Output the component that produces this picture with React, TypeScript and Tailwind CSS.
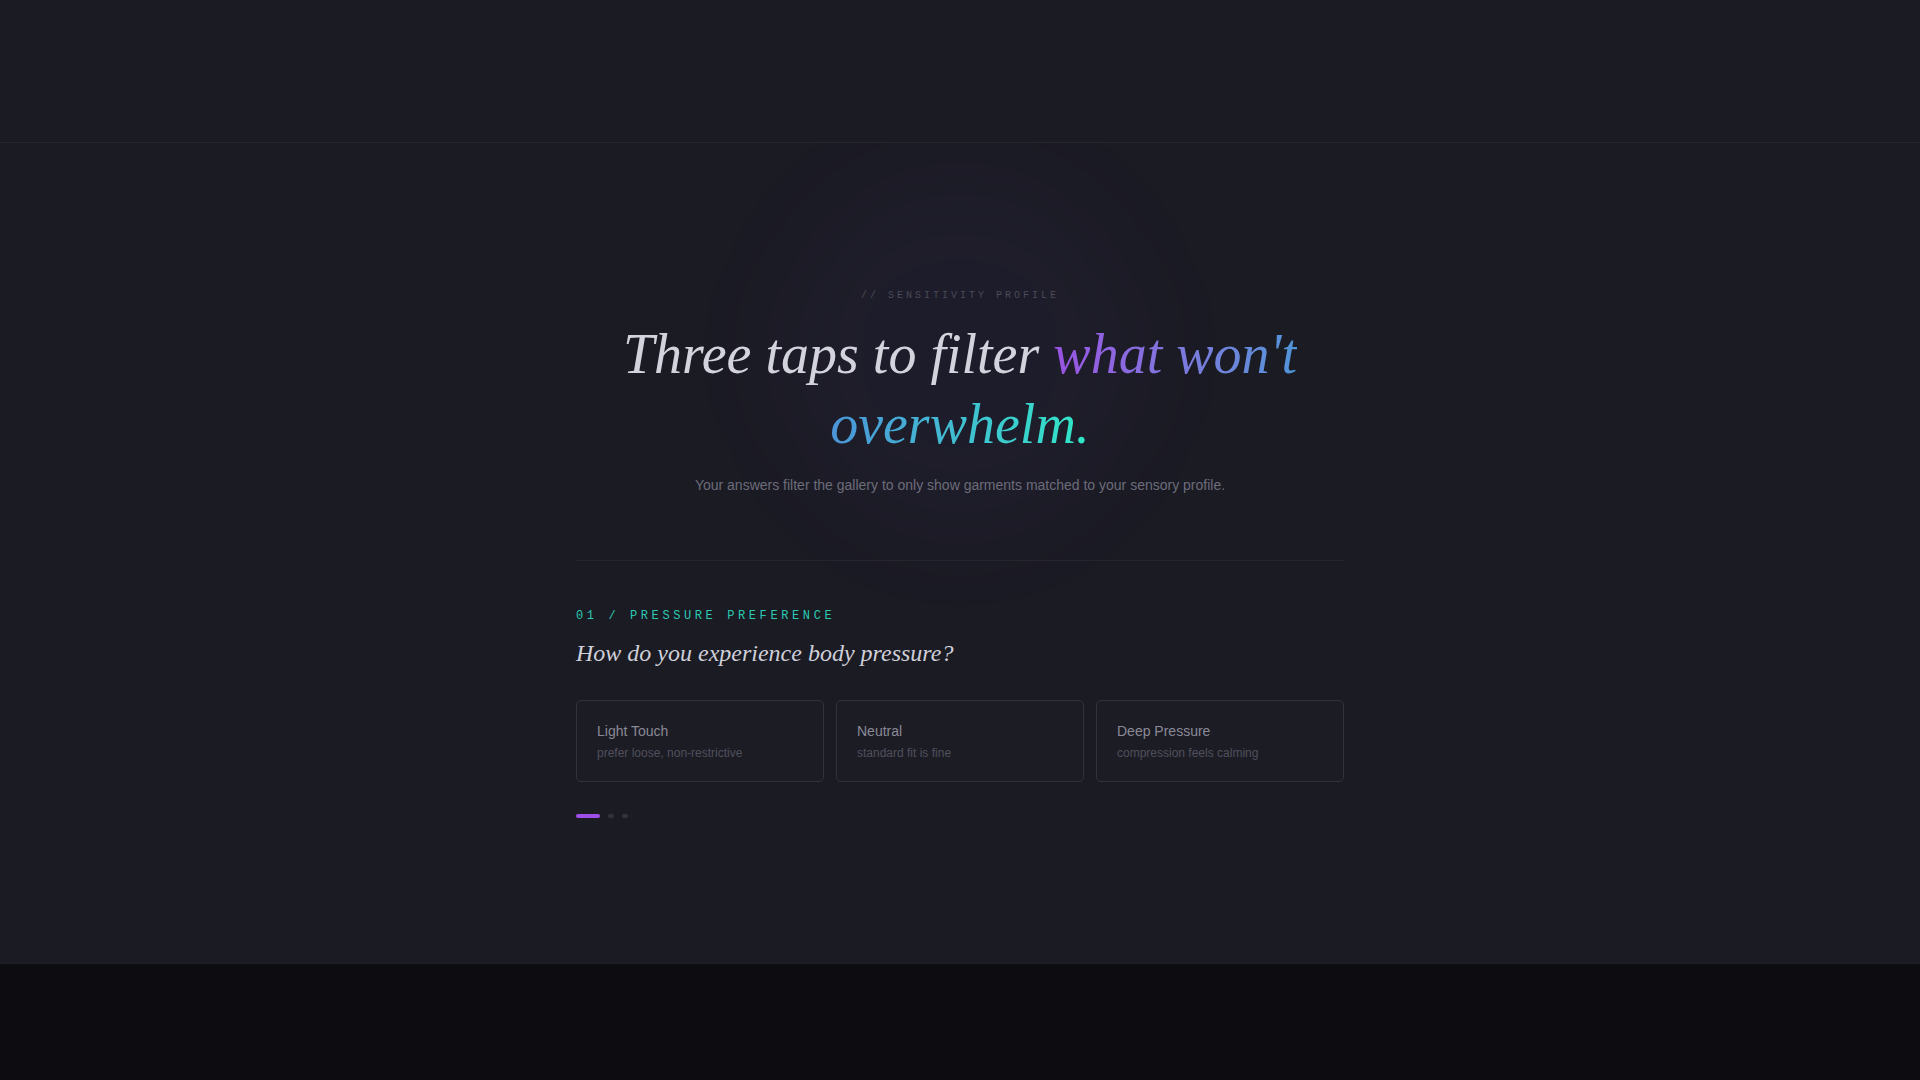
import React from "react";

const options = [
  { title: "Light Touch", hint: "prefer loose, non-restrictive" },
  { title: "Neutral", hint: "standard fit is fine" },
  { title: "Deep Pressure", hint: "compression feels calming" },
];

const OptionCard = ({ title, hint }: { title: string; hint: string }) => {
  return (
    <button
      className="text-left rounded-[5px] border border-[#32323c] bg-[#1c1c25] px-5 py-5 hover:border-[#4a4a56] transition"
      style={{ fontFamily: '"Liberation Sans", Arial, sans-serif' }}>
      <div className="text-[14px] leading-5 text-[#8a8a96]">{title}</div>
      <div className="mt-1 text-[12px] leading-4 text-[#50505c]">{hint}</div>
    </button>
  );
};

const Progress = ({ step, total }: { step: number; total: number }) => {
  return (
    <div className="flex items-center gap-2">
      {Array.from({ length: total }).map((_, i) =>
        i === step ? (
          <span key={i} className="h-1 w-6 rounded-full bg-[#9d4fe6]" />
        ) : (
          <span key={i} className="h-1 w-1.5 rounded-full bg-[#33333d]" />
        )
      )}
    </div>
  );
};

export default function App() {
  return (
    <div className="min-h-screen flex flex-col bg-[#1b1b24]">
      <header className="h-[143px] border-b border-[#25252f]" />

      <main className="relative h-[820px] overflow-hidden">
        {/* soft violet glow behind the intro */}
        <div className="pointer-events-none absolute left-1/2 top-[30px] h-[360px] w-[360px] -translate-x-1/2 rounded-full bg-[#6d4fd0]/[0.04] blur-[50px]" />

        <div className="relative mx-auto w-[768px] pt-[145px]">
          <section className="flex flex-col items-center text-center">
            <p
              className="text-[10px] leading-[15px] tracking-[0.3em] text-[#4a4a58]"
              style={{ fontFamily: '"Liberation Mono", monospace' }}>
              // SENSITIVITY PROFILE
            </p>
            <h1
              className="mt-4 w-[900px] text-[56px] leading-[70px] italic text-[#d3d3dd]"
              style={{ fontFamily: '"Liberation Serif", "Times New Roman", serif' }}>
              Three taps to filter{" "}
              <span className="bg-linear-to-r from-[#9a52e2] via-[#4a97d8] to-[#2ee8c6] bg-clip-text text-transparent">
                what won't overwhelm.
              </span>
            </h1>
            <p
              className="mt-4 text-[14px] leading-5 text-[#6c6c7a]"
              style={{ fontFamily: '"Liberation Sans", Arial, sans-serif' }}>
              Your answers filter the gallery to only show garments matched to your sensory profile.
            </p>
          </section>

          <div className="mt-[65px] h-px bg-[#25252e]" />

          <section className="pt-[47px]">
            <p
              className="text-[12px] leading-4 tracking-[0.3em] text-[#2cc9b3]"
              style={{ fontFamily: '"Liberation Mono", monospace' }}>
              01 / PRESSURE PREFERENCE
            </p>
            <h2
              className="mt-[13px] text-[24px] leading-8 italic text-[#cfcfd9]"
              style={{ fontFamily: '"Liberation Serif", "Times New Roman", serif' }}>
              How do you experience body pressure?
            </h2>

            <div className="mt-[31px] grid grid-cols-3 gap-3">
              {options.map((o) => (
                <OptionCard key={o.title} title={o.title} hint={o.hint} />
              ))}
            </div>

            <div className="mt-8">
              <Progress step={0} total={3} />
            </div>
          </section>
        </div>
      </main>

      <footer className="flex-1 border-t border-[#1f1f28] bg-[#0c0c11]" />
    </div>
  );
}
